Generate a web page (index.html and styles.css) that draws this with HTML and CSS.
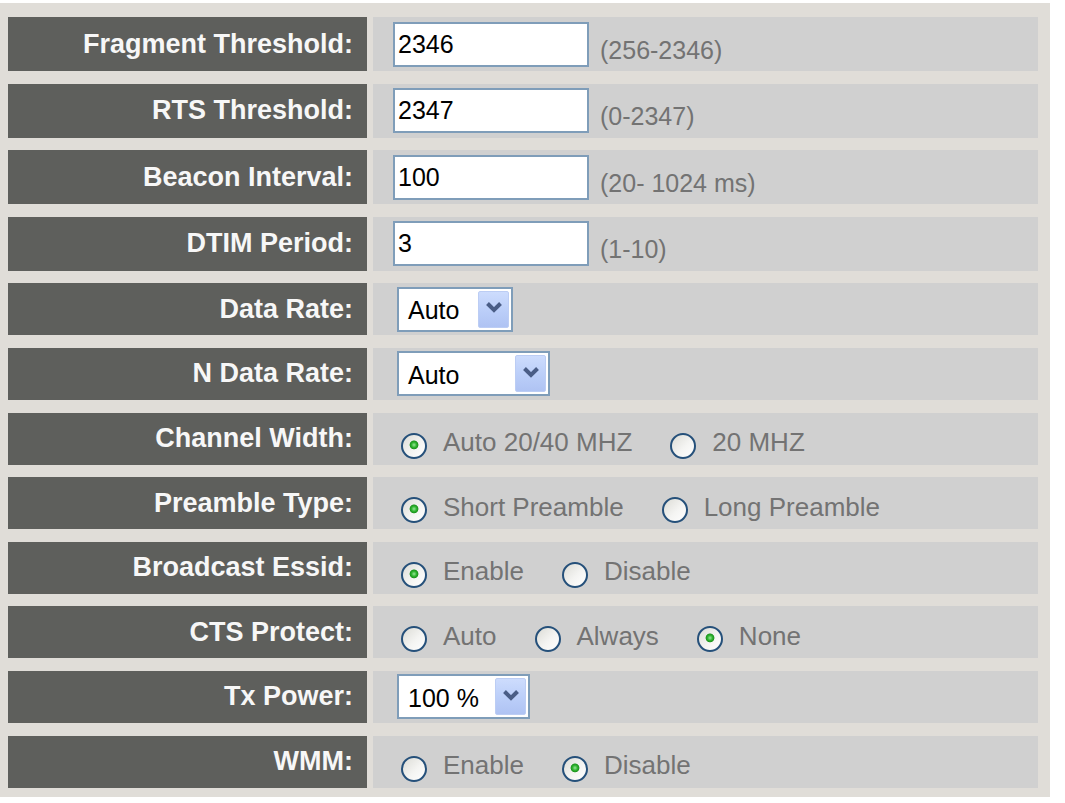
FILE: index.html
```html
<!DOCTYPE html>
<html>
<head>
<meta charset="utf-8">
<title>Wireless Advanced Settings</title>
<link rel="stylesheet" href="styles.css">
</head>
<body>
<div class="frame">
  <div class="form">
    <div class="row tall">
      <div class="label">Fragment Threshold:</div>
      <div class="value"><input class="field" type="text" value="2346"><span class="hint">(256-2346)</span></div>
    </div>
    <div class="row tall">
      <div class="label">RTS Threshold:</div>
      <div class="value"><input class="field" type="text" value="2347"><span class="hint">(0-2347)</span></div>
    </div>
    <div class="row tall">
      <div class="label">Beacon Interval:</div>
      <div class="value"><input class="field" type="text" value="100"><span class="hint">(20- 1024 ms)</span></div>
    </div>
    <div class="row tall">
      <div class="label">DTIM Period:</div>
      <div class="value"><input class="field" type="text" value="3"><span class="hint">(1-10)</span></div>
    </div>
    <div class="row">
      <div class="label">Data Rate:</div>
      <div class="value">
        <div class="select w-data"><span class="sel-text">Auto</span><span class="sel-btn"><svg class="chev" width="18" height="12" viewBox="0 0 18 12"><path d="M2.5 2.5 L9 9 L15.5 2.5" fill="none" stroke="#4a5d86" stroke-width="4"/></svg></span></div>
      </div>
    </div>
    <div class="row">
      <div class="label">N Data Rate:</div>
      <div class="value">
        <div class="select w-ndata"><span class="sel-text">Auto</span><span class="sel-btn"><svg class="chev" width="18" height="12" viewBox="0 0 18 12"><path d="M2.5 2.5 L9 9 L15.5 2.5" fill="none" stroke="#4a5d86" stroke-width="4"/></svg></span></div>
      </div>
    </div>
    <div class="row">
      <div class="label">Channel Width:</div>
      <div class="value">
        <label class="opt"><input class="radio" type="radio" name="cw" checked><span class="opt-text">Auto 20/40 MHZ</span></label>
        <label class="opt"><input class="radio" type="radio" name="cw"><span class="opt-text">20 MHZ</span></label>
      </div>
    </div>
    <div class="row">
      <div class="label">Preamble Type:</div>
      <div class="value">
        <label class="opt"><input class="radio" type="radio" name="pt" checked><span class="opt-text">Short Preamble</span></label>
        <label class="opt"><input class="radio" type="radio" name="pt"><span class="opt-text">Long Preamble</span></label>
      </div>
    </div>
    <div class="row">
      <div class="label">Broadcast Essid:</div>
      <div class="value">
        <label class="opt"><input class="radio" type="radio" name="be" checked><span class="opt-text">Enable</span></label>
        <label class="opt"><input class="radio" type="radio" name="be"><span class="opt-text">Disable</span></label>
      </div>
    </div>
    <div class="row">
      <div class="label">CTS Protect:</div>
      <div class="value">
        <label class="opt"><input class="radio" type="radio" name="cts"><span class="opt-text">Auto</span></label>
        <label class="opt"><input class="radio" type="radio" name="cts"><span class="opt-text">Always</span></label>
        <label class="opt"><input class="radio" type="radio" name="cts" checked><span class="opt-text">None</span></label>
      </div>
    </div>
    <div class="row">
      <div class="label">Tx Power:</div>
      <div class="value">
        <div class="select w-tx"><span class="sel-text">100 %</span><span class="sel-btn"><svg class="chev" width="18" height="12" viewBox="0 0 18 12"><path d="M2.5 2.5 L9 9 L15.5 2.5" fill="none" stroke="#4a5d86" stroke-width="4"/></svg></span></div>
      </div>
    </div>
    <div class="row">
      <div class="label">WMM:</div>
      <div class="value">
        <label class="opt"><input class="radio" type="radio" name="wmm"><span class="opt-text">Enable</span></label>
        <label class="opt"><input class="radio" type="radio" name="wmm" checked><span class="opt-text">Disable</span></label>
      </div>
    </div>
  </div>
</div>
</body>
</html>
```

FILE: styles.css
```css
html, body {
  margin: 0;
  padding: 0;
  background: #ffffff;
}

body {
  font-family: "Liberation Sans", Arial, sans-serif;
}

.frame {
  box-sizing: border-box;
  width: 1050px;
  height: 794px;
  margin-top: 3px;
  padding: 14px 12px 9px 8px;
  background: #e0ddd8;
}

.form {
  display: flex;
  flex-direction: column;
  gap: 12.6px;
}

.row {
  display: flex;
  gap: 6px;
  height: 52px;
}

.row.tall {
  height: 54px;
}

.label {
  box-sizing: border-box;
  width: 359px;
  flex: none;
  background: #5e5f5c;
  color: #f7f7f7;
  font-weight: bold;
  font-size: 27px;
  text-align: right;
  padding-right: 14px;
  display: flex;
  align-items: center;
  justify-content: flex-end;
}

.value {
  flex: 1;
  background: #d0d0d0;
  display: flex;
  align-items: center;
  padding-left: 20px;
}

.field {
  box-sizing: border-box;
  width: 196px;
  height: 45px;
  margin: 0;
  border: 2px solid #7f9db9;
  background: #ffffff;
  padding: 0 3px;
  font-family: "Liberation Sans", Arial, sans-serif;
  font-size: 25px;
  color: #000000;
  outline: none;
}

.hint {
  margin-left: 11px;
  margin-top: 12px;
  font-size: 25px;
  color: #737373;
}

.select {
  box-sizing: border-box;
  height: 45px;
  margin-left: 4px;
  border: 2px solid #7f9db9;
  background: #ffffff;
  padding: 2px;
  display: flex;
  align-items: stretch;
}

.w-data { width: 116px; }
.w-ndata { width: 153px; }
.w-tx { width: 133px; }

.sel-text {
  flex: 1;
  display: flex;
  align-items: center;
  padding-left: 7px;
  padding-top: 3px;
  font-size: 25px;
  color: #000000;
}

.sel-btn {
  box-sizing: border-box;
  width: 31px;
  flex: none;
  border: 1px solid #bccdf4;
  border-radius: 2px;
  background: linear-gradient(180deg, #cddcfd 0%, #bccff9 50%, #afc3f3 100%);
  display: flex;
  align-items: center;
  justify-content: center;
  padding-bottom: 4px;
}

.chev {
  display: block;
  flex: none;
}

.opt {
  display: flex;
  align-items: center;
  margin-left: 8px;
  margin-right: 30px;
}

.radio {
  -webkit-appearance: none;
  appearance: none;
  box-sizing: border-box;
  width: 26px;
  height: 26px;
  margin: 14px 0 0 0;
  border: 2px solid #25507a;
  border-radius: 50%;
  background: linear-gradient(135deg, #dcdcd6 0%, #f4f4f2 55%, #ffffff 100%);
  flex: none;
}

.radio:checked {
  background:
    radial-gradient(circle at 50% 45%, #9be59b 0, #2fb52f 2.5px, #1f941f 4px, rgba(31,148,31,0) 4.8px),
    linear-gradient(135deg, #dcdcd6 0%, #f4f4f2 55%, #ffffff 100%);
}

.opt-text {
  margin-left: 16px;
  margin-top: 8px;
  font-size: 26px;
  color: #737373;
  white-space: nowrap;
}
```
